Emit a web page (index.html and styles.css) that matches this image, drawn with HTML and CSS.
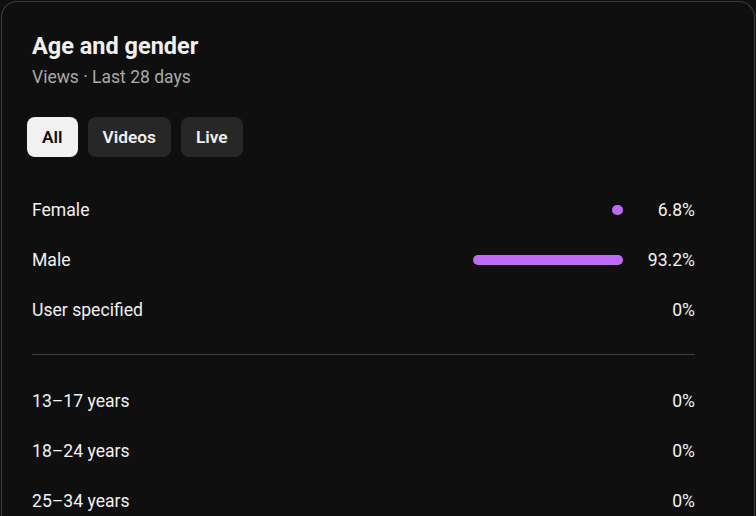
FILE: index.html
```html
<!DOCTYPE html>
<html>
<head>
<meta charset="utf-8">
<link rel="stylesheet" href="styles.css">
</head>
<body>
<div class="card">
  <h1 class="title">Age and gender</h1>
  <div class="subtitle">Views · Last 28 days</div>
  <div class="chips">
    <button class="chip active">All</button>
    <button class="chip">Videos</button>
    <button class="chip">Live</button>
  </div>
  <div class="rows">
    <div class="row"><span class="label">Female</span><div class="bar-wrap"><div class="bar" style="width:6.8%"></div></div><span class="pct">6.8%</span></div>
    <div class="row"><span class="label">Male</span><div class="bar-wrap"><div class="bar" style="width:93.2%"></div></div><span class="pct">93.2%</span></div>
    <div class="row"><span class="label">User specified</span><div class="bar-wrap"></div><span class="pct">0%</span></div>
  </div>
  <hr class="divider">
  <div class="rows">
    <div class="row"><span class="label">13–17 years</span><div class="bar-wrap"></div><span class="pct">0%</span></div>
    <div class="row"><span class="label">18–24 years</span><div class="bar-wrap"></div><span class="pct">0%</span></div>
    <div class="row"><span class="label">25–34 years</span><div class="bar-wrap"></div><span class="pct">0%</span></div>
  </div>
</div>
</body>
</html>
```
FILE: styles.css
```css
html, body {
  margin: 0;
  padding: 0;
  background: #0f0f0f;
  font-family: Roboto, "Liberation Sans", sans-serif;
  color: #f1f1f1;
  overflow: hidden;
}
.card {
  margin: 1px 1px 0 1px;
  border: 1px solid #3d3d3d;
  border-bottom: none;
  border-radius: 16px 16px 0 0;
  background: #0f0f0f;
  padding: 30px 59px 0 30px;
  height: 540px;
}
.title {
  margin: 0;
  font-size: 23.5px;
  line-height: 28px;
  font-weight: 700;
  color: #f1f1f1;
}
.subtitle {
  margin-top: 6px;
  font-size: 17.5px;
  line-height: 22px;
  color: #aaaaaa;
}
.chips {
  display: flex;
  gap: 10px;
  margin: 29px 0 0 -5px;
}
.chip {
  height: 40px;
  padding: 0 15px;
  border: none;
  border-radius: 8px;
  background: #272727;
  color: #f1f1f1;
  font-family: Roboto, "Liberation Sans", sans-serif;
  font-size: 17.3px;
  font-weight: 600;
}
.chip.active {
  background: #f1f1f1;
  color: #0f0f0f;
}
.rows {
  display: flex;
  flex-direction: column;
}
.chips + .rows {
  margin-top: 28px;
}
.row {
  display: flex;
  align-items: center;
  height: 50px;
  font-size: 17.6px;
}
.label {
  flex: 1;
}
.bar-wrap {
  width: 161px;
  display: flex;
  justify-content: flex-end;
}
.bar {
  height: 10px;
  border-radius: 5px;
  background: #bd6af5;
}
.pct {
  width: 72px;
  text-align: right;
}
.divider {
  border: none;
  height: 1px;
  background: #3d3d3d;
  margin: 19px 0 21px 0;
}
```
